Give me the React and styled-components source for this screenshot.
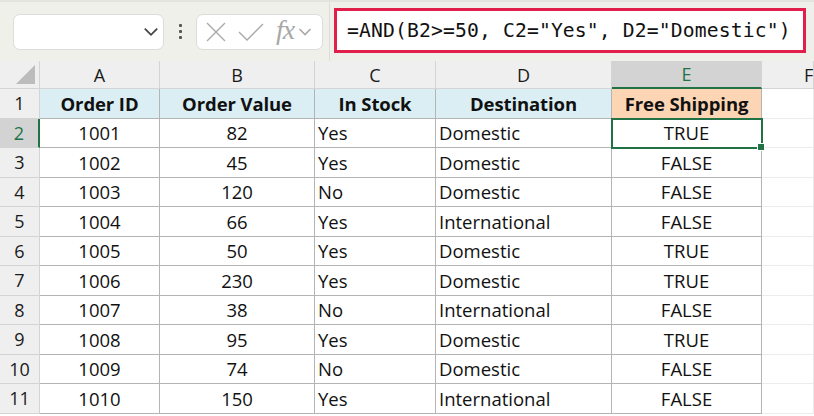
import React from "react";
import styled, { createGlobalStyle } from "styled-components";

const Global = createGlobalStyle`
  html, body { margin: 0; padding: 0; background: #ffffff; }
  body { font-family: "Open Sans", "Noto Sans", sans-serif; overflow: hidden; }
`;

const Page = styled.div`
  width: 814px;
  height: 416px;
  display: flex;
  flex-direction: column;
  overflow: hidden;
  background: #fff;
`;

const Toolbar = styled.div`
  height: 61px;
  box-sizing: border-box;
  background: #eef0e9;
  border-top: 2px solid #e3e5dc;
  display: flex;
  align-items: center;
  padding: 0 8px 0 13px;
  position: relative;
`;

const Box = styled.div`
  height: 36px;
  box-sizing: border-box;
  background: #ffffff;
  border: 1px solid #dcdcd8;
  border-radius: 7px;
  display: flex;
  align-items: center;
`;

const NameBox = styled(Box)`
  width: 151px;
  justify-content: flex-end;
  padding-right: 3px;
`;

const FxBox = styled(Box)`
  width: 127px;
  padding-left: 7px;
  gap: 10px;
`;

const Dots = styled.div`
  width: 32px;
  display: flex;
  flex-direction: column;
  align-items: center;
  gap: 3px;
  span {
    width: 3px;
    height: 3px;
    background: #555;
    border-radius: 1px;
  }
`;

const FxGroup = styled.span`
  display: flex;
  align-items: center;
  gap: 3px;
  margin-left: 2px;
`;

const Fx = styled.span`
  font-family: "Liberation Serif", "DejaVu Serif", serif;
  font-style: italic;
  font-size: 28px;
  line-height: 1;
  color: #a8a8a8;
  letter-spacing: -1px;
  margin-top: -4px;
`;

const Divider = styled.div`
  width: 1px;
  align-self: stretch;
  background: #dcded6;
  margin: 0 4px 0 6px;
`;

const FormulaBox = styled.div`
  width: 472px;
  height: 45px;
  box-sizing: border-box;
  margin-top: -3px;
  border: 3px solid #e0204a;
  background: #fff;
  display: flex;
  align-items: center;
  padding-left: 10px;
  font-family: "DejaVu Sans Mono", "Liberation Mono", monospace;
  font-size: 19.7px;
  letter-spacing: 0.14px;
  color: #111;
  white-space: pre;
`;

const Grid = styled.div`
  display: grid;
  grid-template-columns: 40px 120px 155px 121px 176px 150px 1fr;
  grid-template-rows: 28px;
  grid-auto-rows: 29.5px;
  flex: 1;
`;

const ColHead = styled.div`
  box-sizing: border-box;
  background: ${(p) => (p.$active ? "#d3d3d3" : "#efefef")};
  color: ${(p) => (p.$active ? "#217346" : "#1a1a1a")};
  border-right: 1px solid #d4d4d4;
  border-bottom: ${(p) => (p.$active ? "2px solid #217346" : "1px solid #d4d4d4")};
  display: flex;
  align-items: center;
  justify-content: ${(p) => (p.$left ? "flex-start" : "center")};
  padding-left: ${(p) => (p.$left ? "42px" : "0")};
  font-size: 18px;
  position: relative;
`;

const Corner = styled(ColHead)`
  background: #efefef;
  &::after {
    content: "";
    position: absolute;
    right: 4px;
    bottom: 4px;
    width: 0;
    height: 0;
    border-left: 19px solid transparent;
    border-bottom: 19px solid #bcbcbc;
  }
`;

const RowHead = styled.div`
  box-sizing: border-box;
  background: ${(p) => (p.$active ? "#d3d3d3" : "#efefef")};
  color: ${(p) => (p.$active ? "#217346" : "#1a1a1a")};
  border-right: ${(p) => (p.$active ? "2px solid #217346" : "1px solid #d4d4d4")};
  border-bottom: 1px solid #d4d4d4;
  display: flex;
  align-items: center;
  justify-content: center;
  font-size: 18px;
`;

const Cell = styled.div`
  box-sizing: border-box;
  position: relative;
  background: ${(p) => p.$bg || "#ffffff"};
  border-right: 1px solid ${(p) => (p.$empty ? "#ececec" : "#b4b4b4")};
  border-bottom: 1px solid ${(p) => (p.$empty ? "#ececec" : "#b4b4b4")};
  display: flex;
  align-items: center;
  justify-content: ${(p) => (p.$align === "left" ? "flex-start" : "center")};
  padding-left: ${(p) => (p.$align === "left" ? "3px" : "0")};
  font-size: 18.5px;
  font-weight: ${(p) => (p.$bold ? 700 : 400)};
  letter-spacing: ${(p) => (p.$bold ? "-0.1px" : "0")};
  color: #111;
  white-space: nowrap;
  ${(p) =>
    p.$selected &&
    `
    outline: 2px solid #217346;
    outline-offset: -1px;
    z-index: 1;
  `}
`;

const FillHandle = styled.span`
  position: absolute;
  right: -4px;
  bottom: -4px;
  width: 6px;
  height: 6px;
  background: #217346;
  border: 1px solid #fff;
  z-index: 2;
`;

const Chevron = ({ color = "#444", size = 16 }) => (
  <svg width={size} height={size} viewBox="0 0 16 16">
    <path d="M2.5 5 L8 10.5 L13.5 5" fill="none" stroke={color} strokeWidth="1.6" />
  </svg>
);

const XIcon = () => (
  <svg width="24" height="24" viewBox="0 0 24 24">
    <path d="M3 3 L21 21 M21 3 L3 21" stroke="#a8a8a8" strokeWidth="1.4" fill="none" />
  </svg>
);

const CheckIcon = () => (
  <svg width="26" height="22" viewBox="0 0 26 22">
    <path d="M1 11 L9 19 L25 3" stroke="#a8a8a8" strokeWidth="1.4" fill="none" />
  </svg>
);

const columns = [
  { key: "A", align: "center", head: "Order ID" },
  { key: "B", align: "center", head: "Order Value" },
  { key: "C", align: "left", head: "In Stock" },
  { key: "D", align: "left", head: "Destination" },
  { key: "E", align: "center", head: "Free Shipping" },
];

const rows = [
  ["1001", "82", "Yes", "Domestic", "TRUE"],
  ["1002", "45", "Yes", "Domestic", "FALSE"],
  ["1003", "120", "No", "Domestic", "FALSE"],
  ["1004", "66", "Yes", "International", "FALSE"],
  ["1005", "50", "Yes", "Domestic", "TRUE"],
  ["1006", "230", "Yes", "Domestic", "TRUE"],
  ["1007", "38", "No", "International", "FALSE"],
  ["1008", "95", "Yes", "Domestic", "TRUE"],
  ["1009", "74", "No", "Domestic", "FALSE"],
  ["1010", "150", "Yes", "International", "FALSE"],
];

export default function App() {
  return (
    <Page>
      <Global />
      <Toolbar>
        <NameBox>
          <Chevron size={18} />
        </NameBox>
        <Dots>
          <span />
          <span />
          <span />
        </Dots>
        <FxBox>
          <XIcon />
          <CheckIcon />
          <FxGroup>
            <Fx>fx</Fx>
            <Chevron color="#a8a8a8" size={16} />
          </FxGroup>
        </FxBox>
        <Divider />
        <FormulaBox>{'=AND(B2>=50, C2="Yes", D2="Domestic")'}</FormulaBox>
      </Toolbar>
      <Grid>
        <Corner />
        {columns.map((c) => (
          <ColHead key={c.key} $active={c.key === "E"}>
            {c.key}
          </ColHead>
        ))}
        <ColHead $left>F</ColHead>

        <RowHead>1</RowHead>
        {columns.map((c) => (
          <Cell key={c.key} $bold $bg={c.key === "E" ? "#fcd5b4" : "#daeef3"}>
            {c.head}
          </Cell>
        ))}
        <Cell $empty />

        {rows.map((r, i) => (
          <React.Fragment key={i}>
            <RowHead $active={i === 0}>{i + 2}</RowHead>
            {r.map((v, j) => (
              <Cell key={j} $align={columns[j].align} $selected={i === 0 && j === 4}>
                {v}
                {i === 0 && j === 4 && <FillHandle />}
              </Cell>
            ))}
            <Cell $empty />
          </React.Fragment>
        ))}
      </Grid>
    </Page>
  );
}
